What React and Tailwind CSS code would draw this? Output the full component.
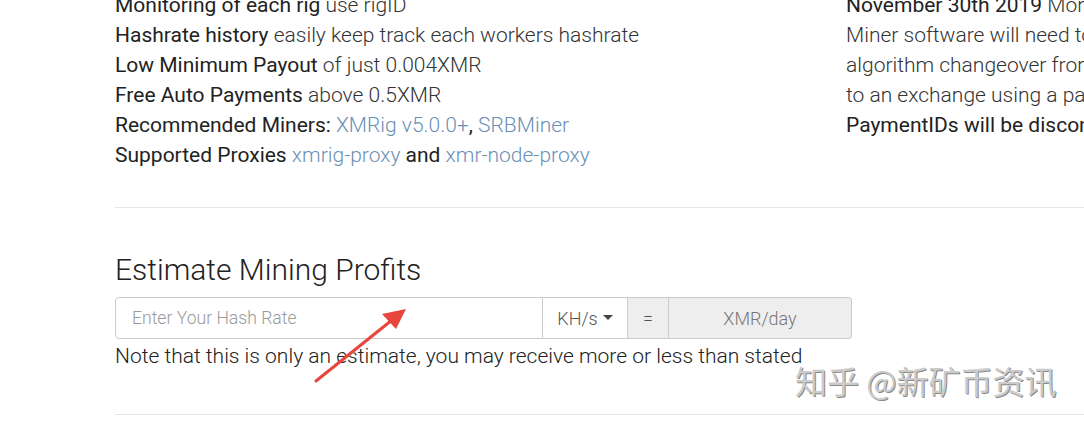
import React from "react";

const L = ({ b, children }) => (
  <div className="whitespace-nowrap">
    <span className="font-normal text-[#222]">{b}</span> {children}
  </div>
);

export default function App() {
  return (
    <div className="relative w-[1084px] h-[424px] overflow-hidden bg-white text-[#333] font-['Roboto',sans-serif] font-light">
      <div className="flex pl-[115px] mt-[-10px] text-[21px] leading-[30px]">
        <div className="w-[731px] shrink-0">
          <L b="Monitoring of each rig">use rigID</L>
          <L b="Hashrate history">easily keep track each workers hashrate</L>
          <L b="Low Minimum Payout">of just 0.004XMR</L>
          <L b="Free Auto Payments">above 0.5XMR</L>
          <div className="whitespace-nowrap">
            <span className="font-normal text-[#222]">Recommended Miners:</span>{" "}
            <span className="text-[#6c8fb6]">XMRig v5.0.0+</span>
            <span className="font-normal text-[#222]">,</span>{" "}
            <span className="text-[#6c8fb6]">SRBMiner</span>
          </div>
          <div className="whitespace-nowrap">
            <span className="font-normal text-[#222]">Supported Proxies</span>{" "}
            <span className="text-[#6c8fb6]">xmrig-proxy</span>{" "}
            <span className="font-normal text-[#222]">and</span>{" "}
            <span className="text-[#6c8fb6]">xmr-node-proxy</span>
          </div>
        </div>
        <div className="flex-1 min-w-0 overflow-hidden">
          <div className="whitespace-nowrap">
            <span className="font-normal text-[#222]">November 30th 2019</span> Monero network upgrade
          </div>
          <div className="whitespace-nowrap">Miner software will need to be updated for the</div>
          <div className="whitespace-nowrap">algorithm changeover from CryptoNight R to RandomX</div>
          <div className="whitespace-nowrap">to an exchange using a paymentID</div>
          <div className="whitespace-nowrap font-normal text-[#222]">PaymentIDs will be discontinued</div>
        </div>
      </div>

      <div className="ml-[115px] mt-[37px] border-t border-[#e6e6e6]" />

      <div className="pl-[115px]">
        <h3 className="mt-[45px] text-[30px] leading-[33px] font-light text-[#222]">Estimate Mining Profits</h3>
        <div className="mt-[11px] flex w-[737px] h-[42px] text-[18px]">
          <div className="w-[428px] shrink-0 flex items-center pl-[16px] text-[17.6px] border border-[#ccc] rounded-l-[4px] text-[#999]">
            Enter Your Hash Rate
          </div>
          <div className="w-[85px] shrink-0 flex items-center justify-center gap-[5px] border-y border-r border-[#ccc] text-[#555]">
            KH/s
            <svg width="10" height="6" viewBox="0 0 10 6"><path d="M0 0 L10 0 L5 5 Z" fill="#444" /></svg>
          </div>
          <div className="w-[41px] shrink-0 flex items-center justify-center border-y border-r border-[#ccc] bg-[#eee] text-[#555]">
            =
          </div>
          <div className="flex-1 flex items-center justify-center border-y border-r border-[#ccc] rounded-r-[4px] bg-[#eee] text-[#777]">
            XMR/day
          </div>
        </div>
        <div className="mt-[2px] text-[21px] leading-[30px] text-[#222]">
          Note that this is only an estimate, you may receive more or less than stated
        </div>
      </div>

      <div className="ml-[115px] mt-[43px] border-t border-[#e6e6e6]" />

      <svg className="absolute left-0 top-0 pointer-events-none" width="1084" height="424">
        <line x1="316" y1="381" x2="392" y2="320" stroke="#e8453c" strokeWidth="3" strokeLinecap="round" />
        <path d="M406 309 L382 314 L396 329 Z" fill="#e8453c" />
      </svg>

      <div
        className="absolute left-[795px] top-[358px] text-[32px] leading-[44px] text-[#cbcbcb] whitespace-nowrap font-normal font-['Noto_Sans_CJK_SC',sans-serif] [text-shadow:1px_1px_0_#8a8a8a,-1px_-1px_0_#fff]"
      >
        知乎 @新矿币资讯
      </div>
    </div>
  );
}
